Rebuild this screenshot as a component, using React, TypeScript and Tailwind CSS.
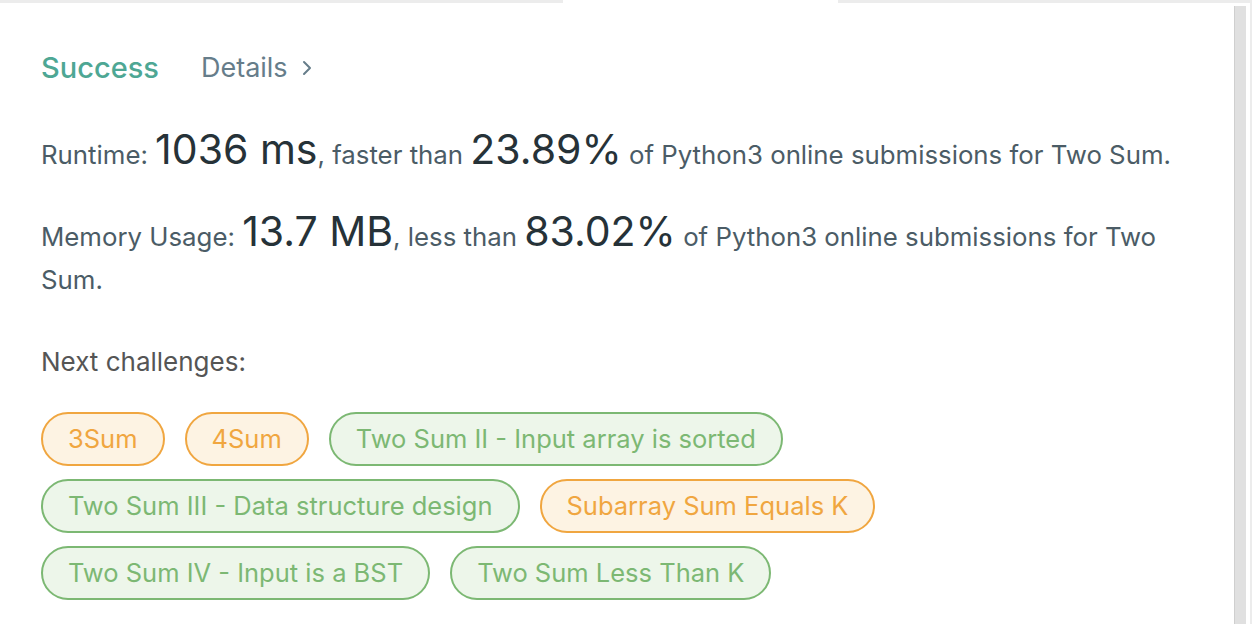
import React from "react";

type Tag = { label: string; kind: "medium" | "easy" };

const tags: Tag[][] = [
  [
    { label: "3Sum", kind: "medium" },
    { label: "4Sum", kind: "medium" },
    { label: "Two Sum II - Input array is sorted", kind: "easy" },
  ],
  [
    { label: "Two Sum III - Data structure design", kind: "easy" },
    { label: "Subarray Sum Equals K", kind: "medium" },
  ],
  [
    { label: "Two Sum IV - Input is a BST", kind: "easy" },
    { label: "Two Sum Less Than K", kind: "easy" },
  ],
];

const ChallengeTag = ({ tag }: { tag: Tag }) => {
  const cls =
    tag.kind === "medium"
      ? "border-[#f0a640] bg-[#fdf3e3] text-[#f0a640]"
      : "border-[#7cb873] bg-[#edf6ea] text-[#7cb873]";
  return (
    <span
      className={`inline-flex h-[54px] items-center rounded-full border-2 px-[25px] text-[25.5px] ${cls}`}
    >
      {tag.label}
    </span>
  );
};

export default function App() {
  return (
    <div
      className="relative h-[624px] w-[1252px] overflow-hidden bg-white"
      style={{ fontFamily: "Inter, 'Liberation Sans', sans-serif" }}
    >
      {/* top tab edge */}
      <div className="flex h-[3px]">
        <div className="w-[563px] bg-[#ececec]" />
        <div className="w-[275px]" />
        <div className="flex-1 bg-[#ececec]" />
      </div>
      <div className="flex h-[621px]">
        <div className="flex-1 pl-[41px] pt-[45px]">
          <div className="flex h-[40px] items-center gap-[42px]">
            <span className="text-[29px] font-medium text-[#4ea794]">Success</span>
            <span className="flex items-center gap-[14px] text-[27px] text-[#667d8a]">
              Details
              <svg width="10" height="16" viewBox="0 0 10 16" fill="none">
                <path d="M2 2l6 6-6 6" stroke="#667d8a" strokeWidth="2" strokeLinecap="round" strokeLinejoin="round" />
              </svg>
            </span>
          </div>

          <p className="mt-[41px] max-w-[1150px] text-[25.8px] leading-[43px] text-[#4b5c66]">
            Runtime: <span className="text-[41px] leading-none text-[#263238]">1036 ms</span>, faster than{" "}
            <span className="text-[41px] leading-none text-[#263238]">23.89%</span> of Python3 online submissions for Two Sum.
          </p>

          <p className="mt-[35px] max-w-[1150px] text-[25.8px] leading-[43px] text-[#4b5c66]">
            Memory Usage: <span className="text-[41px] leading-none text-[#263238]">13.7 MB</span>, less than{" "}
            <span className="text-[41px] leading-none text-[#263238]">83.02%</span> of Python3 online submissions for Two Sum.
          </p>

          <p className="mt-[39px] text-[26px] leading-[43px] text-[#555]">Next challenges:</p>

          <div className="mt-[29px] flex flex-col gap-[13px]">
            {tags.map((row, i) => (
              <div key={i} className="flex gap-[20px]">
                {row.map((t) => (
                  <ChallengeTag key={t.label} tag={t} />
                ))}
              </div>
            ))}
          </div>
        </div>
        {/* scrollbar */}
        <div className="mr-[4px] mt-[3px] w-[12px] border-l border-[#cfcfcf] bg-[#e0e0e0]" />
        <div className="w-[2px] bg-[#ececec]" />
      </div>
    </div>
  );
}
